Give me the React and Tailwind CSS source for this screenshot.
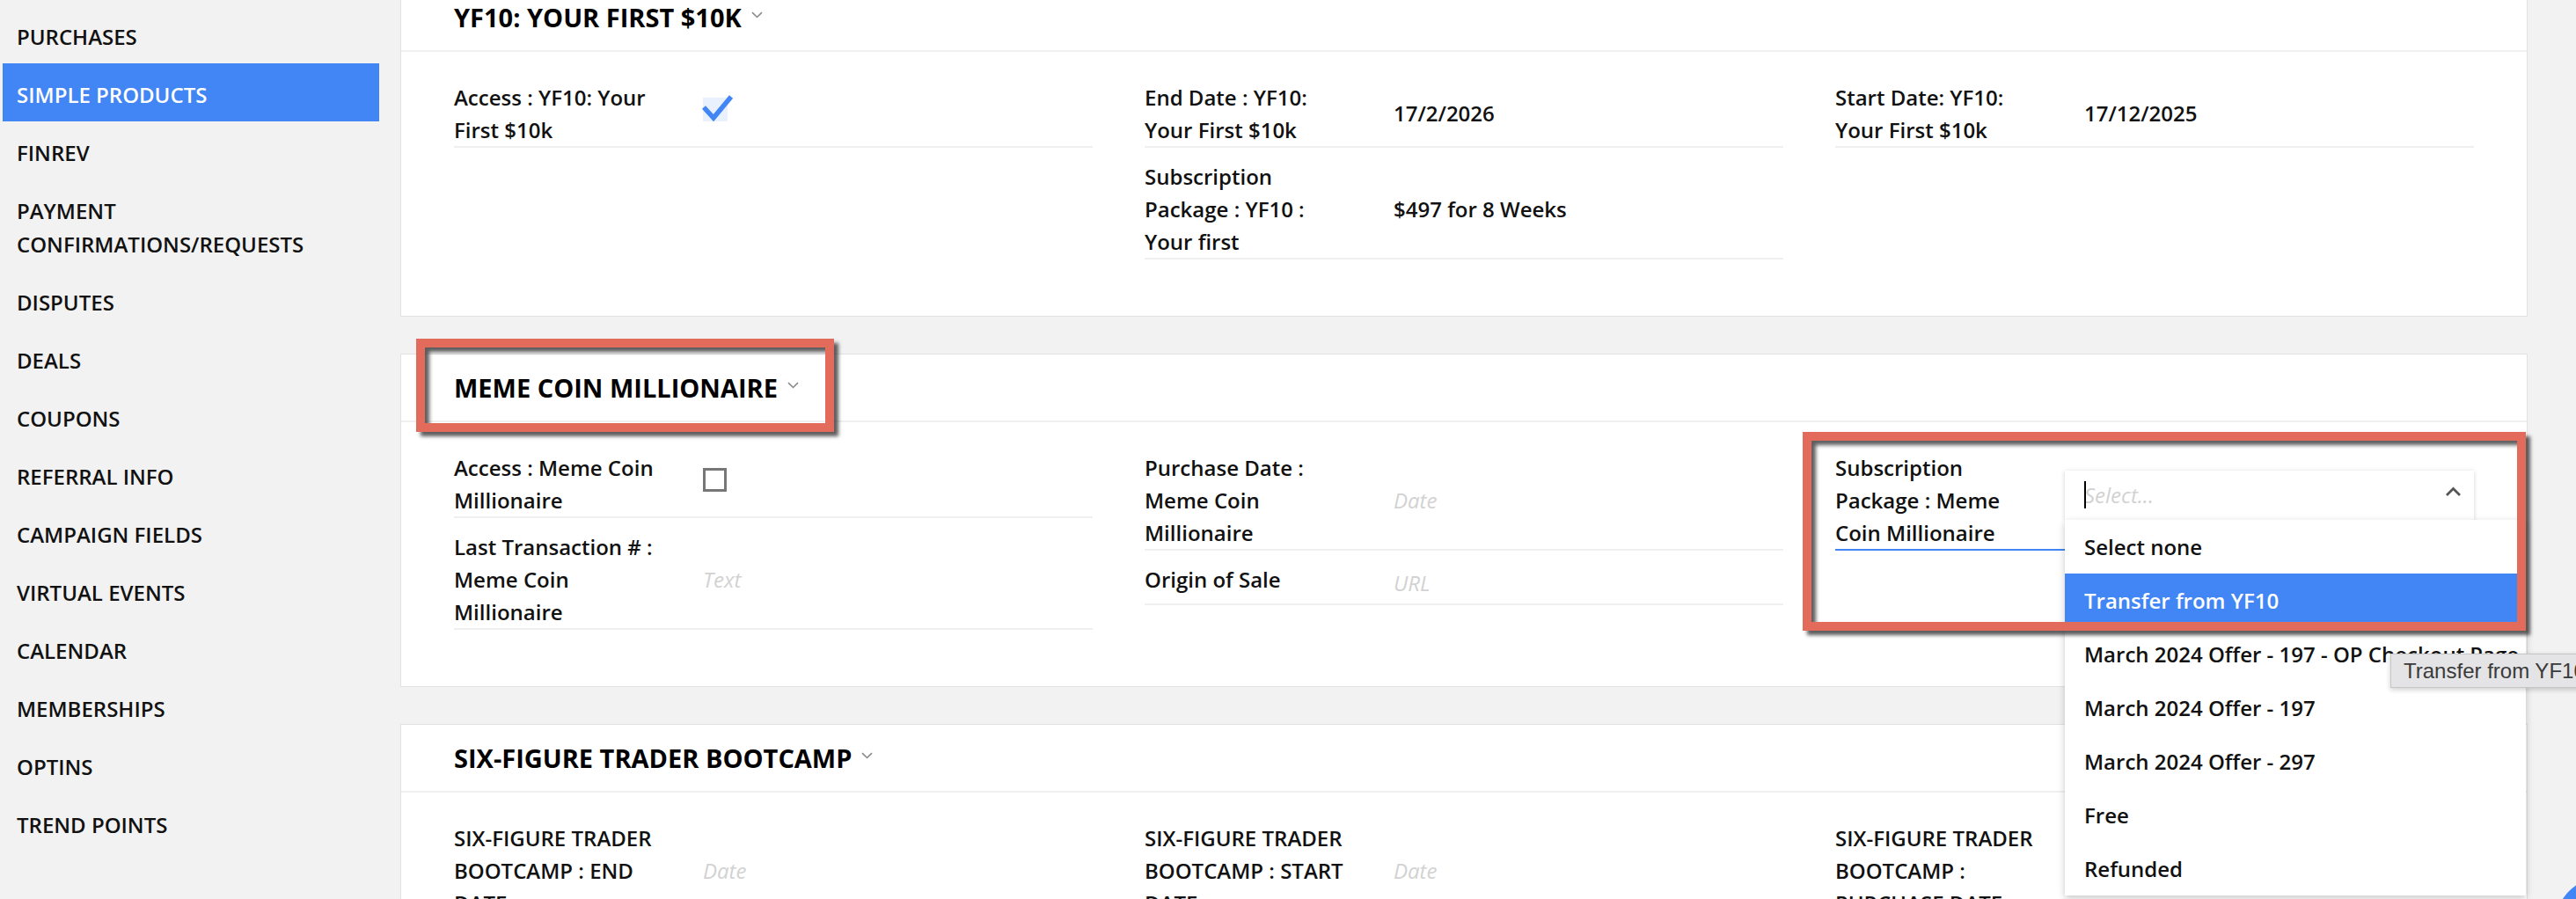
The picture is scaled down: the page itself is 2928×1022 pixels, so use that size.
import React from "react";

const NAV = [
  "PURCHASES",
  "SIMPLE PRODUCTS",
  "FINREV",
  "PAYMENT|CONFIRMATIONS/REQUESTS",
  "DISPUTES",
  "DEALS",
  "COUPONS",
  "REFERRAL INFO",
  "CAMPAIGN FIELDS",
  "VIRTUAL EVENTS",
  "CALENDAR",
  "MEMBERSHIPS",
  "OPTINS",
  "TREND POINTS",
];

const OPTIONS = [
  "Select none",
  "Transfer from YF10",
  "March 2024 Offer - 197 - OP Checkout Page",
  "March 2024 Offer - 197",
  "March 2024 Offer - 297",
  "Free",
  "Refunded",
];

function Chevron() {
  return (
    <svg width="13" height="8" viewBox="0 0 13 8" className="mb-[6px] ml-[11px] shrink-0">
      <path d="M1 1.2 L6.5 6.5 L12 1.2" fill="none" stroke="#8a8a8a" strokeWidth="1.6" />
    </svg>
  );
}

function Card({ title, children, className = "", overlay }) {
  return (
    <section className={`relative border border-[#e2e2e2] bg-white ${className}`}>
      <header className="flex h-[77px] items-center border-b-2 border-[#f0f0f0] px-[60px]">
        <h2 className="text-[29px] font-bold leading-none text-black">{title}</h2>
        <Chevron />
      </header>
      <div className="grid grid-cols-3 gap-x-[59px] px-[60px] pb-[64px] pt-[33px]">{children}</div>
      {overlay}
    </section>
  );
}

function Col({ children }) {
  return <div className="flex flex-col gap-[14px]">{children}</div>;
}

function Field({ label, children, focused, bare }) {
  return (
    <div className={`flex border-b-2 ${focused ? "border-[#4285f4]" : "border-[#efefef]"}`}>
      <div className="w-[231px] shrink-0 text-[24px] font-semibold leading-[37px] text-[#111]">{label}</div>
      <div className={`ml-[30px] flex min-h-[46px] flex-1 items-center self-center ${bare ? "" : "pl-[22px]"}`}>
        {children}
      </div>
    </div>
  );
}

function Value({ children }) {
  return <span className="text-[24px] font-semibold text-[#111]">{children}</span>;
}

function Placeholder({ children }) {
  return <span className="text-[24px] italic text-[#d2d2d2]">{children}</span>;
}

function Checked() {
  return (
    <div className="relative mb-[10px] h-[27px] w-[28px] bg-[#eaf1fe]">
      <svg width="40" height="34" viewBox="0 0 40 34" className="absolute -top-[5px] left-[-2px] overflow-visible">
        <path d="M3 16 L14 28 L34 4" fill="none" stroke="#4285f4" strokeWidth="5.5" strokeLinejoin="miter" />
      </svg>
    </div>
  );
}

function Unchecked() {
  return <div className="mb-[10px] h-[27px] w-[27px] border-[3px] border-[#777] bg-white" />;
}

function SelectOpen() {
  return (
    <div className="relative mb-[11px] flex h-[56px] w-full items-center bg-white pl-[22px] pr-[14px] shadow-[0_1px_5px_rgba(0,0,0,0.18)]">
      <div className="relative flex-1">
        <span className="absolute left-0 top-[2px] h-[31px] w-[2px] bg-black" />
        <span className="text-[24px] italic text-[#d2d2d2]">Select...</span>
      </div>
      <svg width="19" height="12" viewBox="0 0 19 12" className="mb-[8px]">
        <path d="M2 10 L9.5 2.5 L17 10" fill="none" stroke="#555" strokeWidth="2.8" />
      </svg>
      <ul className="absolute left-0 top-full z-10 w-[524px] bg-white shadow-[0_3px_8px_rgba(0,0,0,0.22)]">
        {OPTIONS.map((opt, i) => (
          <li
            key={opt}
            className={`flex h-[61px] items-center whitespace-nowrap px-[22px] text-[24px] font-semibold ${
              i === 1 ? "bg-[#4285f4] text-white" : "text-[#111]"
            }`}
          >
            {opt}
          </li>
        ))}
      </ul>
    </div>
  );
}

function RedBox({ className }) {
  return (
    <div
      className={`pointer-events-none absolute z-20 border-[10px] border-[#e26b5c] shadow-[5px_5px_4px_rgba(40,40,40,0.75),inset_5px_5px_4px_rgba(40,40,40,0.75)] ${className}`}
    />
  );
}

export default function App() {
  return (
    <div className="relative flex h-[1022px] overflow-hidden bg-[#f2f2f2] font-['Open_Sans',sans-serif]">
      <aside className="w-[455px] shrink-0 pl-[3px] pr-[24px] pt-[6px]">
        {NAV.map((item) => {
          const active = item === "SIMPLE PRODUCTS";
          const parts = item.split("|");
          return (
            <div
              key={item}
              className={`pb-[11px] pl-[16px] pt-[17px] text-[24px] font-semibold uppercase leading-[38px] ${
                active ? "bg-[#4285f4] text-white" : "text-[#111]"
              }`}
            >
              {parts.map((p, i) => (
                <div key={i}>{p}</div>
              ))}
            </div>
          );
        })}
      </aside>

      <main className="-mt-[19px] flex w-[2418px] shrink-0 flex-col gap-[42px]">
        <Card title="YF10: YOUR FIRST $10K">
          <Col>
            <Field label="Access : YF10: Your First $10k">
              <Checked />
            </Field>
          </Col>
          <Col>
            <Field label="End Date : YF10: Your First $10k">
              <Value>17/2/2026</Value>
            </Field>
            <Field label="Subscription Package : YF10 : Your first">
              <Value>$497 for 8 Weeks</Value>
            </Field>
          </Col>
          <Col>
            <Field label="Start Date: YF10: Your First $10k">
              <Value>17/12/2025</Value>
            </Field>
          </Col>
        </Card>

        <Card
          title="MEME COIN MILLIONAIRE"
          className="z-10"
          overlay={
            <>
              <RedBox className="left-[17px] top-[-18px] h-[106px] w-[475px]" />
              <RedBox className="left-[1593px] top-[88px] h-[226px] w-[822px]" />
            </>
          }
        >
          <Col>
            <Field label="Access : Meme Coin Millionaire">
              <Unchecked />
            </Field>
            <Field label="Last Transaction # : Meme Coin Millionaire">
              <Placeholder>Text</Placeholder>
            </Field>
          </Col>
          <Col>
            <Field label="Purchase Date : Meme Coin Millionaire">
              <Placeholder>Date</Placeholder>
            </Field>
            <Field label="Origin of Sale">
              <Placeholder>URL</Placeholder>
            </Field>
          </Col>
          <Col>
            <Field label="Subscription Package : Meme Coin Millionaire" focused bare>
              <SelectOpen />
            </Field>
          </Col>
        </Card>

        <Card title="SIX-FIGURE TRADER BOOTCAMP">
          <Col>
            <Field label="SIX-FIGURE TRADER BOOTCAMP : END DATE">
              <Placeholder>Date</Placeholder>
            </Field>
          </Col>
          <Col>
            <Field label="SIX-FIGURE TRADER BOOTCAMP : START DATE">
              <Placeholder>Date</Placeholder>
            </Field>
          </Col>
          <Col>
            <Field label="SIX-FIGURE TRADER BOOTCAMP : PURCHASE DATE">
              <Placeholder>Date</Placeholder>
            </Field>
          </Col>
        </Card>
      </main>

      <div className="absolute left-[2717px] top-[743px] z-30 h-[39px] w-[260px] whitespace-nowrap border border-[#c6c6c6] bg-[#e4e4e6] pl-[14px] font-['Liberation_Sans',sans-serif] text-[24px] leading-[37px] text-[#3a3a3a] shadow-[0_2px_6px_rgba(0,0,0,0.2)]">
        Transfer from YF10
      </div>
      <div className="absolute left-[2904px] top-[997px] h-[110px] w-[110px] rounded-full bg-[#4285f4]" />
    </div>
  );
}
